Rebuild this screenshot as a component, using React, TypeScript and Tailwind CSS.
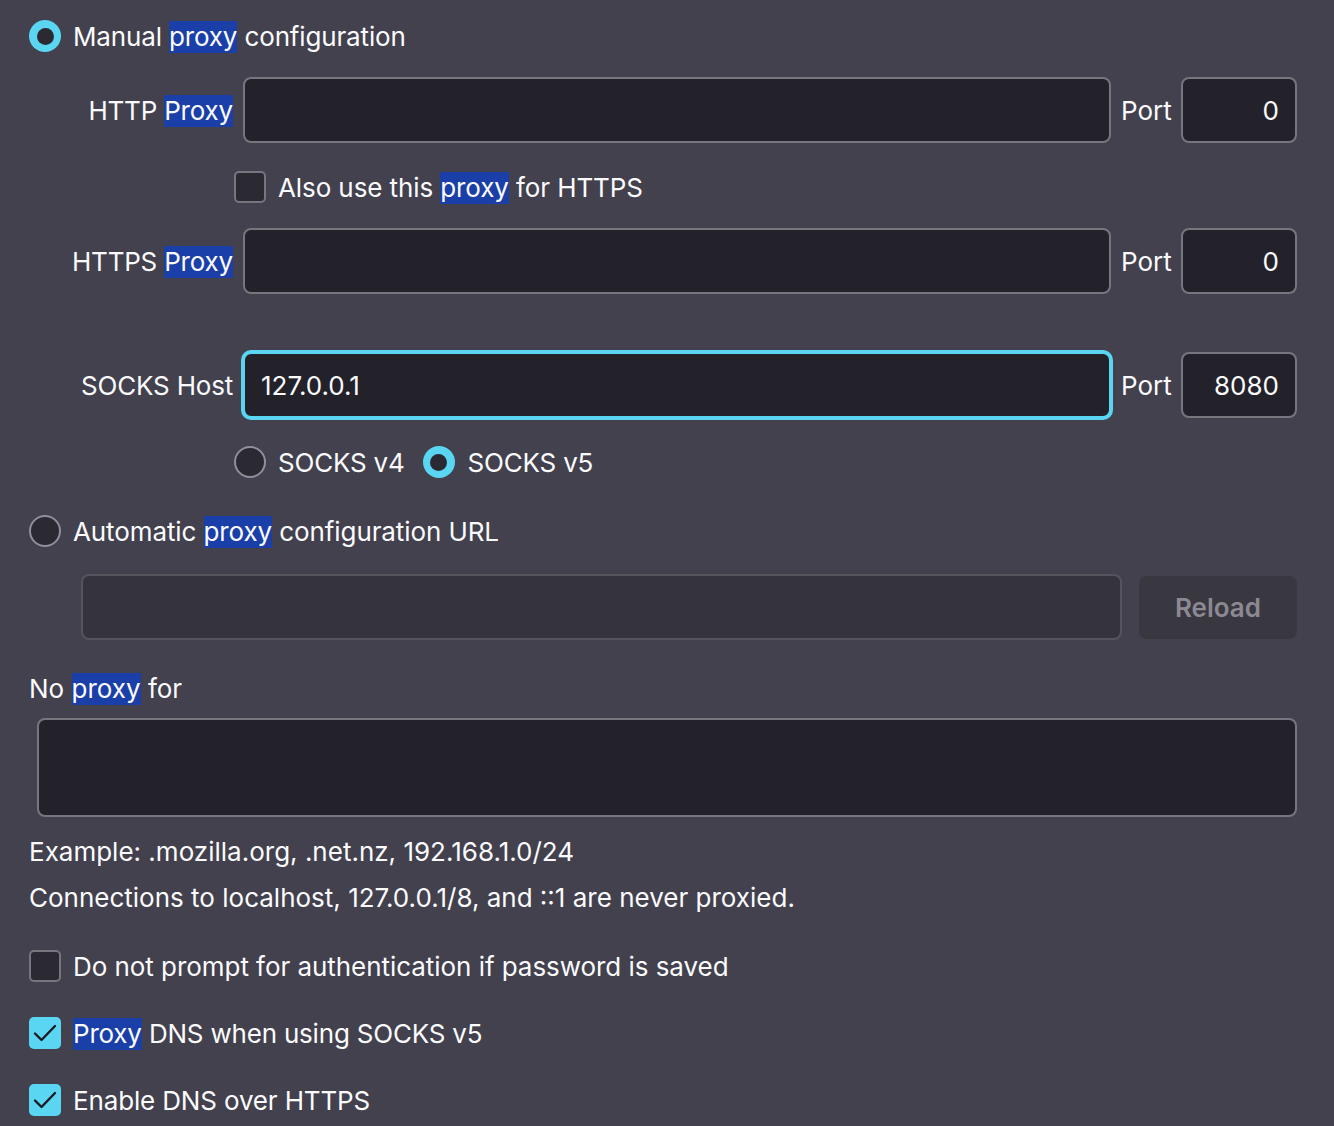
import React from "react";

const font = { fontFamily: "Inter, 'Noto Sans', sans-serif" };

const Hl = ({ children }: { children: React.ReactNode }) => (
  <span className="bg-[#1a3fa8] inline-block leading-[32px]">{children}</span>
);

const Radio = ({ on }: { on?: boolean }) =>
  on ? (
    <span className="w-[32px] h-[32px] rounded-full bg-[#5ad6f3] flex items-center justify-center shrink-0">
      <span className="w-[17px] h-[17px] rounded-full bg-[#2b2a33]" />
    </span>
  ) : (
    <span className="w-[32px] h-[32px] rounded-full bg-[#2b2a33] border-2 border-[#8f8f9d] shrink-0" />
  );

const Check = ({ on }: { on?: boolean }) =>
  on ? (
    <span className="w-[32px] h-[32px] rounded-[5px] bg-[#5ad6f3] flex items-center justify-center shrink-0">
      <svg width="32" height="32" viewBox="0 0 32 32" fill="none">
        <path d="M6 16.5 L12.5 23 L26 9" stroke="#1c1b22" strokeWidth="2.4" strokeLinecap="round" strokeLinejoin="round" />
      </svg>
    </span>
  ) : (
    <span className="w-[32px] h-[32px] rounded-[5px] bg-[#2b2a33] border-2 border-[#77767e] shrink-0" />
  );

const ProxyRow = ({ label, value, port, focus, className }: any) => (
  <div className={"flex items-center " + className}>
    <div className="w-[204px] shrink-0 text-right tracking-[-0.2px] whitespace-nowrap">{label}</div>
    <div
      className={
        "ml-[10px] flex-1 h-[66px] rounded-[8px] bg-[#23222b] border-2 flex items-center px-[16px] " +
        (focus ? "border-[#5ad6f3] ring-2 ring-[#5ad6f3]" : "border-[#77767e]")
      }
    >
      {value}
    </div>
    <div className="ml-[10px] w-[60px] shrink-0">Port</div>
    <div className="w-[116px] shrink-0 h-[66px] rounded-[8px] bg-[#23222b] border-2 border-[#77767e] flex items-center justify-end px-[16px]">
      {port}
    </div>
  </div>
);

export default function App() {
  return (
    <div style={font} className="min-h-screen bg-[#42414d] text-[#fbfbfe] text-[26px] pl-[29px] pr-[37px] pt-[18px] pb-[8px]">
      <div className="flex items-center h-[36px] gap-[12px]">
        <Radio on />
        <span className="tracking-[-0.15px]">Manual <Hl>proxy</Hl> configuration</span>
      </div>

      <ProxyRow className="mt-[23px]" label={<>HTTP <Hl>Proxy</Hl></>} port="0" />

      <div className="flex items-center h-[36px] gap-[12px] mt-[26px] ml-[205px]">
        <Check />
        <span className="tracking-[-0.1px]">Also use this <Hl>proxy</Hl> for HTTPS</span>
      </div>

      <ProxyRow className="mt-[23px]" label={<>HTTPS <Hl>Proxy</Hl></>} port="0" />

      <ProxyRow className="mt-[58px]" label="SOCKS Host" value="127.0.0.1" port="8080" focus />

      <div className="flex items-center h-[36px] mt-[26px] ml-[205px]">
        <Radio />
        <span className="ml-[12px] tracking-[-0.2px]">SOCKS v4</span>
        <span className="ml-[18px]"><Radio on /></span>
        <span className="ml-[13px] tracking-[-0.2px]">SOCKS v5</span>
      </div>

      <div className="flex items-center h-[36px] gap-[12px] mt-[33px]">
        <Radio />
        <span className="tracking-[-0.1px]">Automatic <Hl>proxy</Hl> configuration URL</span>
      </div>

      <div className="flex items-center mt-[25px] ml-[52px] gap-[17px]">
        <div className="flex-1 h-[66px] rounded-[8px] bg-[#35343c] border-2 border-[#55545c]" />
        <div className="w-[158px] shrink-0 h-[63px] rounded-[8px] bg-[#393740] flex items-center justify-center font-semibold text-[#8b8a92]">
          Reload
        </div>
      </div>

      <div className="flex items-center h-[36px] mt-[30px]">
        <span>No <Hl>proxy</Hl> for</span>
      </div>

      <div className="mt-[12px] ml-[8px] h-[99px] rounded-[8px] bg-[#23222b] border-2 border-[#77767e]" />

      <div className="flex items-center h-[36px] mt-[16px]">Example: .mozilla.org, .net.nz, 192.168.1.0/24</div>
      <div className="flex items-center h-[36px] mt-[10px]">Connections to localhost, 127.0.0.1/8, and ::1 are never proxied.</div>

      <div className="flex items-center h-[36px] gap-[12px] mt-[33px]">
        <Check />
        <span className="tracking-[-0.05px]">Do not prompt for authentication if password is saved</span>
      </div>
      <div className="flex items-center h-[36px] gap-[12px] mt-[31px]">
        <Check on />
        <span className="tracking-[-0.2px]"><Hl>Proxy</Hl> DNS when using SOCKS v5</span>
      </div>
      <div className="flex items-center h-[36px] gap-[12px] mt-[31px]">
        <Check on />
        <span className="tracking-[-0.15px]">Enable DNS over HTTPS</span>
      </div>
    </div>
  );
}
